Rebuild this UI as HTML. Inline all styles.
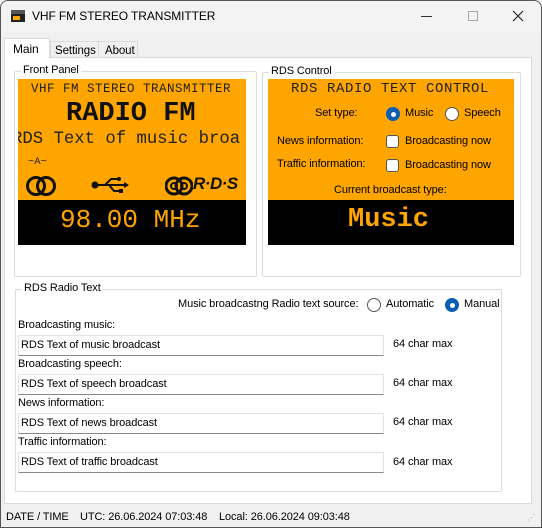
<!DOCTYPE html>
<html><head><meta charset="utf-8"><style>
*{box-sizing:border-box;margin:0;padding:0}
body{width:542px;height:528px;overflow:hidden;background:#f0f0f0;font-family:"Liberation Sans",sans-serif;font-size:11px;letter-spacing:-0.1px;color:#000;position:relative}
.a{position:absolute;white-space:nowrap}
.win{position:absolute;left:0;top:0;width:542px;height:528px;border:1px solid #555;border-radius:8px 8px 0 0;overflow:hidden;background:#f0f0f0}
.title{position:absolute;left:0;top:0;width:542px;height:31px;background:#f3f3f3}
.page{position:absolute;left:3px;top:56px;width:528px;height:447px;background:#fff;border:1px solid #dadada}
.grp{position:absolute;border:1px solid #dcdcdc;border-radius:2px}
.grp .lg{position:absolute;top:-8px;left:6px;background:#fff;padding:0 2px}
.or{position:absolute;background:#ffa500}
.bk{position:absolute;background:#000}
.mono{font-family:"Liberation Mono",monospace;letter-spacing:0}
.tb{position:absolute;left:17px;width:366px;height:21px;background:#fff;border:1px solid #e3e3e3;border-bottom:1px solid #888;padding:3px 0 0 2px}
.rad{position:absolute;width:14px;height:14px;border-radius:50%;border:1px solid #555;background:#fff}
.rad.on{border:none;background:#0a5fb4}
.rad.on::after{content:"";position:absolute;left:4.5px;top:4.5px;width:5px;height:5px;border-radius:50%;background:#fff}
.chk{position:absolute;width:13px;height:13px;border:1px solid #555;border-radius:3px;background:#fff}
.tab{position:absolute;background:#f0f0f0;border:1px solid #dadada;border-bottom:none;padding:3px 0 0 4px;font-size:11.5px}
</style></head><body>
<div class="win">
<div class="title">
 <svg class="a" style="left:10px;top:9px" width="14" height="12"><rect x="0" y="0" width="14" height="4" fill="#555"/><rect x="0" y="4" width="14" height="8" fill="#222"/><rect x="2" y="6" width="7" height="4" fill="#ffa500"/></svg>
 <div class="a" style="left:31px;top:8px;font-size:12px">VHF FM STEREO TRANSMITTER</div>
 <div class="a" style="left:420px;top:15px;width:11px;height:1px;background:#333"></div>
 <div class="a" style="left:467px;top:10px;width:10px;height:10px;border:1px solid #aaa"></div>
 <svg class="a" style="left:511px;top:9px" width="12" height="12"><path d="M1 1L11 11M11 1L1 11" stroke="#222" stroke-width="1.2"/></svg>
</div>
<div class="page">
 <div class="grp" style="left:9px;top:13px;width:243px;height:206px"><span class="lg">Front Panel</span></div>
 <div class="grp" style="left:257px;top:14px;width:259px;height:205px"><span class="lg">RDS Control</span></div>
 <div class="grp" style="left:10px;top:231px;width:487px;height:203px"><span class="lg">RDS Radio Text</span></div>
</div>
<div class="tab" style="left:49px;top:40px;width:49px;height:16px">Settings</div>
<div class="tab" style="left:97px;top:40px;width:40px;height:16px;padding-left:6px">About</div>
<div class="tab" style="left:3px;top:37px;width:46px;height:21px;background:#fff;padding:3px 0 0 8px;font-size:12px">Main</div>
<!-- front panel display -->
<div class="or" style="left:17px;top:78px;width:228px;height:121px"></div>
<div class="bk" style="left:17px;top:199px;width:228px;height:45px"></div>
<div class="a mono" style="left:30px;top:81px;font-size:12.5px;letter-spacing:0.5px;color:#222">VHF FM STEREO TRANSMITTER</div>
<div class="a mono" style="left:65px;top:98px;font-size:27px;font-weight:bold;color:#111">RADIO FM</div>
<div class="a mono" style="left:17px;top:129px;width:228px;overflow:hidden;font-size:17.3px;color:#222"><span style="margin-left:-6px">RDS Text of music broa</span></div>
<div class="a mono" style="left:27px;top:155px;font-size:10.5px;color:#222">~A~</div>
<svg class="a" style="left:24px;top:174px" width="32" height="22"><circle cx="11" cy="11" r="8.5" fill="none" stroke="#111" stroke-width="3"/><circle cx="21" cy="11" r="8.5" fill="none" stroke="#111" stroke-width="3"/></svg>
<svg class="a" style="left:90px;top:175px" width="38" height="18"><circle cx="4" cy="9" r="3.5" fill="#111"/><path d="M4 9H36M14 9L20 3H27M18 9L23 15H29" stroke="#111" stroke-width="2" fill="none"/><circle cx="28" cy="3" r="2" fill="#111"/><rect x="28" y="13" width="4" height="4" fill="#111"/><path d="M33 6L38 9L33 12Z" fill="#111"/></svg>
<svg class="a" style="left:164px;top:174px" width="28" height="22"><circle cx="9" cy="11" r="8" fill="none" stroke="#111" stroke-width="3"/><circle cx="9" cy="11" r="3" fill="none" stroke="#111" stroke-width="2"/><circle cx="19" cy="11" r="8" fill="none" stroke="#111" stroke-width="3"/><circle cx="19" cy="11" r="3" fill="none" stroke="#111" stroke-width="2"/></svg>
<div class="a" style="left:192px;top:173px;font-size:17px;font-weight:bold;font-style:italic;color:#111;letter-spacing:-0.5px">R·D·S</div>
<div class="a mono" style="left:59px;top:204px;font-size:26px;color:#ffa500">98.00 MHz</div>
<!-- RDS control -->
<div class="or" style="left:267px;top:78px;width:246px;height:121px"></div>
<div class="bk" style="left:267px;top:199px;width:246px;height:45px"></div>
<div class="a mono" style="left:290px;top:80px;font-size:14px;letter-spacing:0.6px;color:#222">RDS RADIO TEXT CONTROL</div>
<div class="a" style="left:314px;top:106px">Set type:</div>
<div class="rad on" style="left:385px;top:106px"></div>
<div class="a" style="left:404px;top:106px">Music</div>
<div class="rad" style="left:444px;top:106px"></div>
<div class="a" style="left:463px;top:106px">Speech</div>
<div class="a" style="left:276px;top:134px">News information:</div>
<div class="chk" style="left:385px;top:134px"></div>
<div class="a" style="left:404px;top:134px">Broadcasting now</div>
<div class="a" style="left:276px;top:157px">Traffic information:</div>
<div class="chk" style="left:385px;top:158px"></div>
<div class="a" style="left:404px;top:158px">Broadcasting now</div>
<div class="a" style="left:333px;top:183px">Current broadcast type:</div>
<div class="a mono" style="left:347px;top:204px;font-size:27px;color:#ffa500;font-weight:bold">Music</div>
<!-- radio text -->
<div class="a" style="left:177px;top:297px">Music broadcastng Radio text source:</div>
<div class="rad" style="left:366px;top:297px"></div>
<div class="a" style="left:385px;top:297px">Automatic</div>
<div class="rad on" style="left:444px;top:297px"></div>
<div class="a" style="left:463px;top:297px">Manual</div>
<div class="a" style="left:17px;top:318px">Broadcasting music:</div>
<div class="tb" style="top:334px">RDS Text of music broadcast</div>
<div class="a" style="left:392px;top:337px">64 char max</div>
<div class="a" style="left:17px;top:357px">Broadcasting speech:</div>
<div class="tb" style="top:373px">RDS Text of speech broadcast</div>
<div class="a" style="left:392px;top:376px">64 char max</div>
<div class="a" style="left:17px;top:396px">News information:</div>
<div class="tb" style="top:412px">RDS Text of news broadcast</div>
<div class="a" style="left:392px;top:415px">64 char max</div>
<div class="a" style="left:17px;top:435px">Traffic information:</div>
<div class="tb" style="top:451px">RDS Text of traffic broadcast</div>
<div class="a" style="left:392px;top:455px">64 char max</div>
<!-- status -->
<div class="a" style="left:5px;top:510px">DATE / TIME</div>
<div class="a" style="left:79px;top:510px">UTC: 26.06.2024 07:03:48</div>
<div class="a" style="left:218px;top:510px">Local: 26.06.2024 09:03:48</div>
<div class="a" style="left:526px;top:512px;color:#aaa;font-size:8px">⋰</div>
</div>
</body></html>
